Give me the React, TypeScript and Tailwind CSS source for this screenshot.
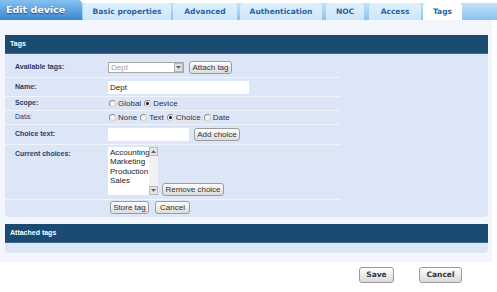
import React from 'react';

const label = "font-['Liberation_Sans',sans-serif] text-[7px] text-[#1f3c6e]";
const ctl = "font-['Liberation_Sans',sans-serif] text-[8px]";

const Btn = ({ w, children }: { w: string; children: React.ReactNode }) => (
  <div
    className={`${w} h-[13px] flex items-center justify-center rounded-[3px] border border-[#9c9c9c] bg-gradient-to-b from-[#fdfdfd] to-[#dcdcdc] ${ctl} text-[#333] leading-none`}
  >
    {children}
  </div>
);

const Radio = ({ on, text }: { on?: boolean; text: string }) => (
  <div className="flex items-center gap-[2px] mr-[3px]">
    <span className="w-[7px] h-[7px] rounded-full border border-[#8e8e8e] border-b-[#d0d0d0] border-r-[#d0d0d0] bg-[#f6f6f6] flex items-center justify-center">
      {on && <span className="w-[3px] h-[3px] rounded-full bg-[#111]" />}
    </span>
    <span className={`${ctl} text-[#333] leading-none`}>{text}</span>
  </div>
);

const Row = ({
  h,
  name,
  bold = true,
  children,
}: {
  h: string;
  name: string;
  bold?: boolean;
  children?: React.ReactNode;
}) => (
  <>
    <div className={`flex ${h} items-center`}>
      <div className={`w-[103px] pl-[10px] ${label} ${bold ? 'font-bold' : ''}`}>{name}</div>
      <div className="flex items-center gap-[5px]">{children}</div>
    </div>
    <div className="h-px bg-[#f0f4fc]" />
  </>
);

const tabs = [
  { t: 'Basic properties', w: 'w-[88px] ml-[1px]' },
  { t: 'Advanced', w: 'w-[64px] ml-[2px]' },
  { t: 'Authentication', w: 'w-[82px] ml-[3px]' },
  { t: 'NOC', w: 'w-[38px] ml-[4px]' },
  { t: 'Access', w: 'w-[52px] ml-[5px]' },
];

const Arrow = ({ down }: { down?: boolean }) => (
  <svg width="5" height="3" viewBox="0 0 5 3">
    <path d={down ? 'M0 0h5L2.5 3z' : 'M0 3h5L2.5 0z'} fill="#666" />
  </svg>
);

export default function App() {
  return (
    <div className="w-[497px] h-[292px] bg-white overflow-hidden">
      {/* top bar */}
      <div className="flex h-[20px]">
        <div className="w-[82px] h-[20px] rounded-tr-[4px] bg-gradient-to-b from-[#86c2ef] to-[#3a86d2] flex items-center pl-[6px] font-['DejaVu_Sans',sans-serif] font-bold text-[9.5px] text-white [text-shadow:0_1px_1px_#1d4f86]">
          Edit device
        </div>
        <div className="flex-1 mt-[3px] h-[17px] bg-gradient-to-b from-[#c4e3f9] to-[#88c3ee] flex">
          {tabs.map((tab) => (
            <div
              key={tab.t}
              className={`${tab.w} h-[17px] rounded-t-[4px] bg-gradient-to-b from-[#e0f1fd] to-[#cbe6fa] flex items-center justify-center font-['DejaVu_Sans',sans-serif] font-bold text-[7.5px] text-[#2a62a6]`}
            >
              {tab.t}
            </div>
          ))}
          <div className="w-[39px] ml-[2px] h-[17px] rounded-t-[4px] bg-white flex items-center justify-center font-['DejaVu_Sans',sans-serif] font-bold text-[7.5px] text-[#2a62a6]">
            Tags
          </div>
        </div>
      </div>

      {/* main panel */}
      <div className="w-[492px] h-[242px] bg-[#f3f6fd] pt-[15px] pl-[5px]">
        <div className="w-[483px]">
          <div className="h-[19px] bg-[#1b4a72] border-b border-[#3d6a90] flex items-center pl-[5px] font-['Liberation_Sans',sans-serif] font-bold text-[7px] text-white">
            Tags
          </div>
          <div className="h-[163px] bg-[#dde6f7] rounded-b-[4px] pt-[4px]">
            <div className="w-[335px] flex flex-col">
              <Row h="h-[19px]" name="Available tags:">
                <div className="w-[76px] h-[11px] border border-[#a8a8a8] bg-white flex">
                  <span className={`flex-1 pl-[2px] ${ctl} text-[#a0a0a0] leading-[9px]`}>Dept</span>
                  <span className="w-[9px] h-[9px] bg-[#e2e2e2] border border-[#b5b5b5] flex items-center justify-center">
                    <Arrow down />
                  </span>
                </div>
                <Btn w="w-[43px]">Attach tag</Btn>
              </Row>
              <Row h="h-[18px]" name="Name:">
                <div className={`w-[141px] h-[13px] bg-white pl-[2px] ${ctl} text-[#222] leading-[13px]`}>Dept</div>
              </Row>
              <Row h="h-[13px]" name="Scope:">
                <div className="flex pl-[1px]">
                  <Radio text="Global" />
                  <Radio on text="Device" />
                </div>
              </Row>
              <Row h="h-[13px]" name="Data:" bold={false}>
                <div className="flex pl-[1px]">
                  <Radio text="None" />
                  <Radio text="Text" />
                  <Radio on text="Choice" />
                  <Radio text="Date" />
                </div>
              </Row>
              <Row h="h-[19px]" name="Choice text:">
                <div className="w-[81px] h-[13px] bg-white" />
                <Btn w="w-[46px]">Add choice</Btn>
              </Row>
              <div className="flex h-[54px] items-start">
                <div className={`w-[103px] pl-[10px] pt-[4px] ${label} font-bold`}>Current choices:</div>
                <div className="flex items-end gap-[4px] pt-[2px]">
                  <div className="w-[50px] h-[48px] bg-white flex">
                    <div className={`flex-1 overflow-hidden pl-[2px] pt-[1px] ${ctl} text-[#222] leading-[9.4px] whitespace-nowrap`}>
                      <div>Accounting</div>
                      <div>Marketing</div>
                      <div>Production</div>
                      <div>Sales</div>
                    </div>
                    <div className="w-[9px] bg-[#f1f1f1] flex flex-col justify-between">
                      <span className="h-[9px] bg-[#e4e4e4] border border-[#b9b9b9] flex items-center justify-center">
                        <Arrow />
                      </span>
                      <span className="h-[9px] bg-[#e4e4e4] border border-[#b9b9b9] flex items-center justify-center">
                        <Arrow down />
                      </span>
                    </div>
                  </div>
                  <div className="mb-[-1px]">
                    <Btn w="w-[62px]">Remove choice</Btn>
                  </div>
                </div>
              </div>
              <div className="h-px bg-[#f0f4fc]" />
              <div className="flex h-[15px] items-center pl-[105px] gap-[6px]">
                <Btn w="w-[39px]">Store tag</Btn>
                <Btn w="w-[35px]">Cancel</Btn>
              </div>
            </div>
          </div>

          <div className="mt-[7px] h-[19px] bg-[#1b4a72] border-b border-[#3d6a90] flex items-center pl-[5px] font-['Liberation_Sans',sans-serif] font-bold text-[7px] text-white">
            Attached tags
          </div>
          <div className="h-[10px] bg-[#dde6f7] rounded-b-[4px]" />
        </div>
      </div>

      {/* footer buttons */}
      <div className="flex pl-[359px] pt-[5px] gap-[25px]">
        {['Save', 'Cancel'].map((b, i) => (
          <div
            key={b}
            className={`${i === 0 ? 'w-[35px]' : 'w-[43px]'} h-[16px] rounded-[3px] border border-[#9a9a9a] bg-gradient-to-b from-[#ffffff] to-[#d9d9d9] flex items-center justify-center font-['DejaVu_Sans',sans-serif] font-bold text-[7.5px] text-[#333]`}
          >
            {b}
          </div>
        ))}
      </div>
    </div>
  );
}
